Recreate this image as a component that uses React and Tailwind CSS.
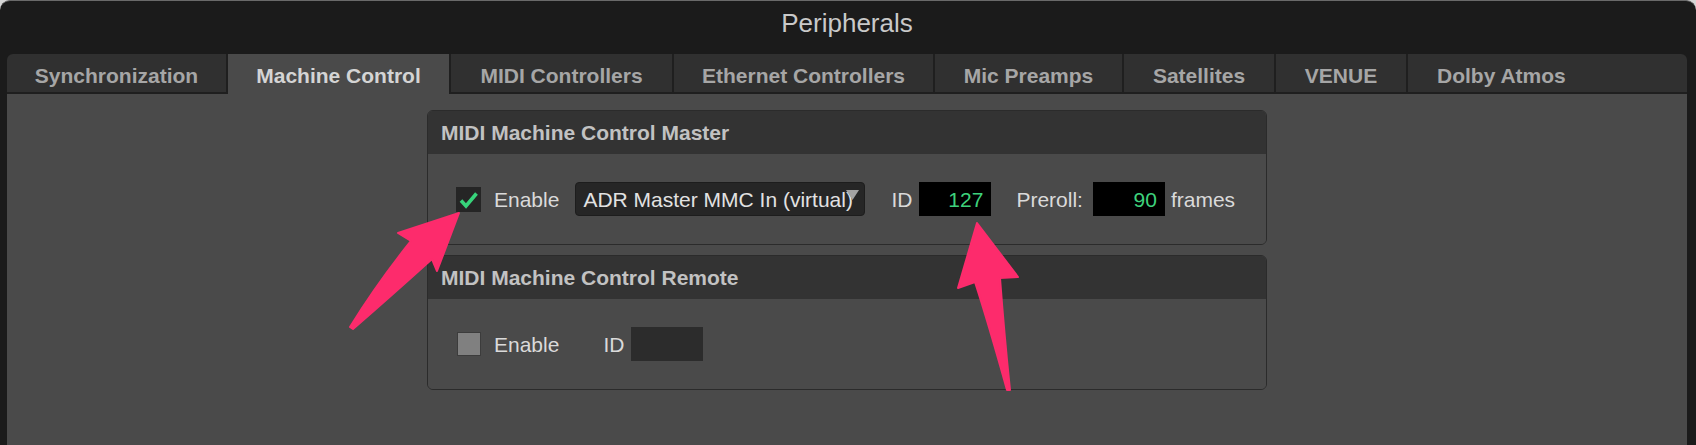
import React from "react";

const tabs = [
  { label: "Synchronization", w: "w-[221px]", active: false },
  { label: "Machine Control", w: "w-[223px]", active: true },
  { label: "MIDI Controllers", w: "w-[223px]", active: false },
  { label: "Ethernet Controllers", w: "w-[261px]", active: false },
  { label: "Mic Preamps", w: "w-[189px]", active: false },
  { label: "Satellites", w: "w-[152px]", active: false },
  { label: "VENUE", w: "w-[132px]", active: false },
];

function Tab({ label, w, active }) {
  return (
    <div
      className={
        active
          ? `${w} shrink-0 h-[40px] bg-[#4a4a4a] border-r-2 border-[#1f1f1f] flex justify-center pt-[11px] text-[21px] leading-[21px] font-bold text-[#d4d4d4]`
          : `${w} shrink-0 h-[40px] bg-[#303030] border-r-2 border-b-2 border-[#1f1f1f] flex justify-center pt-[11px] text-[21px] leading-[21px] font-bold text-[#a6a6a6]`
      }
    >
      {label}
    </div>
  );
}

function Panel({ title, children }) {
  return (
    <div className="w-[840px] rounded-[6px] border border-[#2b2b2b] overflow-hidden">
      <div className="h-[43px] bg-[#333333] pl-[13px] pt-[11px] text-[21px] leading-[21px] font-bold text-[#c2c2c2]">
        {title}
      </div>
      <div className="h-[90px] bg-[#4a4a4a] flex items-center pl-[28px] text-[21px] leading-[21px] text-[#dadada]">
        {children}
      </div>
    </div>
  );
}

function Arrows() {
  return (
    <svg
      className="absolute left-0 top-0 pointer-events-none"
      width="1696"
      height="445"
      viewBox="0 0 1696 445"
    >
      <path
        d="M350 327 Q378 282 411 241 L398 233 L459 213 L437 271 L432 259 Q391 296 353 329 Z"
        fill="#fd2b6c"
        stroke="#fd2b6c"
        strokeWidth="2"
        strokeLinejoin="round"
      />
      <path
        d="M1007 390 Q988 322 975 282 L958 288 L977 223 L1018 277 L1000 278 Q1004 332 1010 390 Z"
        fill="#fd2b6c"
        stroke="#fd2b6c"
        strokeWidth="2"
        strokeLinejoin="round"
      />
    </svg>
  );
}

export default function App() {
  return (
    <div className="relative w-[1696px] h-[445px] overflow-hidden bg-[#d6d6d6] font-['Liberation_Sans',Arial,sans-serif]">
      <div className="flex h-full flex-col rounded-t-[10px] border-t border-[#6a6a6a] bg-[#1b1b1b] pl-[7px] pr-[9px]">
        <div className="h-[53px] shrink-0 flex justify-center pt-[9px] text-[26px] leading-[26px] text-[#c9c9c9]">
          Peripherals
        </div>
        <div className="flex h-[40px] shrink-0 rounded-t-[6px] overflow-hidden">
          {tabs.map((t) => (
            <Tab key={t.label} {...t} />
          ))}
          <div className="flex-1 h-[40px] bg-[#303030] border-b-2 border-[#1f1f1f] pl-[29px] pt-[11px] text-[21px] leading-[21px] font-bold text-[#a6a6a6]">
            Dolby Atmos
          </div>
        </div>
        <div className="flex-1 bg-[#4a4a4a] pt-[16px]">
          <div className="mx-auto flex w-[840px] flex-col gap-[10px]">
            <Panel title="MIDI Machine Control Master">
              <div className="w-[25px] h-[25px] bg-[#252525] flex items-center justify-center">
                <svg width="25" height="25" viewBox="0 0 25 25">
                  <path
                    d="M5 13.5 L10 19 L20.5 6.5"
                    fill="none"
                    stroke="#37d37a"
                    strokeWidth="3.6"
                  />
                </svg>
              </div>
              <span className="ml-[13px]">Enable</span>
              <div className="relative ml-[16px] w-[290px] h-[34px] rounded-[4px] bg-[#262626] border border-[#1d1d1d] flex items-center pl-[7px] whitespace-nowrap text-[#e2e2e2]">
                ADR Master MMC In (virtual)
                <svg
                  className="absolute right-[5px] top-[7px]"
                  width="13"
                  height="10"
                  viewBox="0 0 13 10"
                >
                  <polygon points="0,0 13,0 6.5,10" fill="#a3a3a3" />
                </svg>
              </div>
              <span className="ml-[26px]">ID</span>
              <div className="ml-[7px] w-[72px] h-[34px] bg-black flex items-center justify-end pr-[8px] text-[#3ed27c]">
                127
              </div>
              <span className="ml-[25px]">Preroll:</span>
              <div className="ml-[10px] w-[72px] h-[34px] bg-black flex items-center justify-end pr-[8px] text-[#3ed27c]">
                90
              </div>
              <span className="ml-[6px]">frames</span>
            </Panel>
            <Panel title="MIDI Machine Control Remote">
              <div className="ml-[1px] w-[24px] h-[24px] bg-[#808080] border border-[#3c3c3c]" />
              <span className="ml-[13px]">Enable</span>
              <span className="ml-[44px]">ID</span>
              <div className="ml-[7px] w-[72px] h-[34px] bg-[#2c2c2c]" />
            </Panel>
          </div>
        </div>
      </div>
      <Arrows />
    </div>
  );
}
